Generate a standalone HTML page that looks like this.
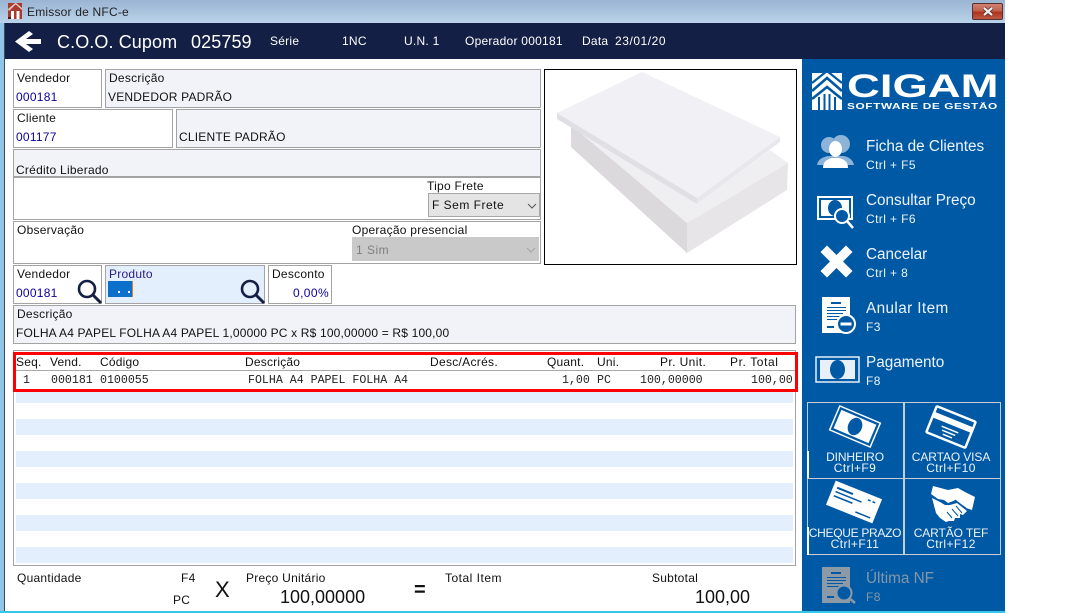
<!DOCTYPE html>
<html lang="pt"><head><meta charset="utf-8"><title>Emissor de NFC-e</title>
<style>
html,body{margin:0;padding:0;width:1080px;height:613px;overflow:hidden;background:#fff}
body{position:relative;font-family:"Liberation Sans",sans-serif;font-size:12px;color:#111}
.b{position:absolute;box-sizing:border-box;border:1px solid #a3a3a3;outline:0;background:#fff}
.g{background:#f1f3f9}
.r{position:absolute}
.t{position:absolute;white-space:nowrap;line-height:14px;letter-spacing:.25px}
.bl{color:#0a00a0}
.w{color:#fff}
.m{font-family:"Liberation Mono",monospace;font-size:11.6px;letter-spacing:0;color:#222}
.h1{font-size:15.3px;color:#eef4fb;line-height:18px;letter-spacing:0}
.h2{font-size:12px;color:#eef4fb;letter-spacing:.4px}
.c{text-align:center;color:#eef4fb;width:96px;letter-spacing:-.1px;line-height:11px}
.c span{letter-spacing:.4px}
svg{position:absolute;overflow:visible}
</style></head><body>
<div class="r" style="left:0;top:0;width:1005px;height:23px;background:linear-gradient(#9ab4d2,#bad3ea)"></div>
<div class="r" style="left:0;top:23px;width:4px;height:590px;background:#8fc6e6"></div>
<div class="r" style="left:4px;top:23px;width:1px;height:590px;background:#3a4a60"></div>
<div class="r" style="left:0;top:611px;width:1005px;height:2px;background:#35c6e8"></div>
<svg style="left:8px;top:3px" width="14" height="16" viewBox="0 0 14 16"><rect width="14" height="16" fill="#a83a30"/><path d="M0 6L6 1L8 1L1 8ZM8 0L14 5V7L6 0Z" fill="#e8c8c0"/><rect x="3" y="8" width="3" height="8" fill="#fff"/><rect x="8.500" y="8" width="3" height="8" fill="#fff"/><rect x="0" y="14" width="3" height="2" fill="#501510"/></svg>
<div class="t" style="left:27px;top:5px;color:#222;letter-spacing:.2px">Emissor de NFC-e</div>
<div class="r" style="left:972px;top:3px;width:31px;height:17px;box-sizing:border-box;border:1px solid #5a3030;border-radius:2px;background:linear-gradient(#cf8373 0,#c2614c 45%,#b0331d 55%,#bb5a44 100%)"></div>
<svg style="left:982px;top:7px" width="12" height="9" viewBox="0 0 12 9"><path d="M2 1L10 8M10 1L2 8" stroke="#4a2a2a" stroke-width="3.800"/><path d="M2 1L10 8M10 1L2 8" stroke="#eee" stroke-width="2.200"/></svg>

<div class="r" style="left:5px;top:23px;width:1000px;height:36px;background:#131f45"></div>
<svg style="left:15px;top:31px" width="27" height="22" viewBox="0 0 27 22"><path d="M0 10.500L14 0L18 3L11 8H26V13H11L18 18L14 21Z" fill="#fff"/></svg>
<div class="t w" style="left:57px;top:32px;font-size:18px;line-height:21px;letter-spacing:.1px">C.O.O. Cupom</div>
<div class="t w" style="left:191px;top:32px;font-size:18px;line-height:21px;letter-spacing:.1px">025759</div>
<div class="t w" style="left:270px;top:34px">Série</div>
<div class="t w" style="left:342px;top:34px">1NC</div>
<div class="t w" style="left:404px;top:34px">U.N. 1</div>
<div class="t w" style="left:465px;top:34px">Operador 000181</div>
<div class="t w" style="left:582px;top:34px">Data</div>
<div class="t w" style="left:615px;top:34px;letter-spacing:.55px">23/01/20</div>

<div class="b" style="left:13px;top:69px;width:89px;height:39px"></div>
<div class="t" style="left:17px;top:71px">Vendedor</div><div class="t bl" style="left:16px;top:90px">000181</div>
<div class="b g" style="left:105px;top:69px;width:436px;height:39px"></div>
<div class="t" style="left:109px;top:71px">Descrição</div><div class="t" style="left:108px;top:90px;letter-spacing:.2px">VENDEDOR PADRÃO</div>
<div class="b" style="left:13px;top:109px;width:160px;height:39px"></div>
<div class="t" style="left:17px;top:111px">Cliente</div><div class="t bl" style="left:16px;top:130px">001177</div>
<div class="b g" style="left:176px;top:109px;width:365px;height:39px"></div>
<div class="t" style="left:179px;top:130px;letter-spacing:.2px">CLIENTE PADRÃO</div>
<div class="b g" style="left:13px;top:149px;width:528px;height:28px"></div>
<div class="t" style="left:16px;top:163px">Crédito Liberado</div>
<div class="b" style="left:13px;top:177px;width:528px;height:43px"></div>
<div class="t" style="left:427px;top:179px">Tipo Frete</div>
<div class="r" style="left:428px;top:193px;width:112px;height:24px;box-sizing:border-box;border:1px solid #a8a8a8;background:#e4e4e4"></div>
<div class="t" style="left:432px;top:198px;letter-spacing:.5px">F Sem Frete</div>
<svg style="left:527px;top:203px" width="10" height="6" viewBox="0 0 10 6"><path d="M1 1L5 5L9 1" fill="none" stroke="#555" stroke-width="1"/></svg>
<div class="b" style="left:13px;top:221px;width:528px;height:43px"></div>
<div class="t" style="left:17px;top:223px">Observação</div>
<div class="t" style="left:352px;top:223px">Operação presencial</div>
<div class="r" style="left:352px;top:237px;width:187px;height:24px;background:#c9c9c9"></div>
<div class="t" style="left:356px;top:243px;color:#7f7f7f;letter-spacing:.5px">1 Sim</div>
<svg style="left:526px;top:247px" width="10" height="6" viewBox="0 0 10 6"><path d="M1 1L5 5L9 1" fill="none" stroke="#a5a5a5" stroke-width="1"/></svg>

<div class="r" style="left:544px;top:69px;width:253px;height:196px;box-sizing:border-box;border:1px solid #000;background:#fff"></div>
<svg style="left:544px;top:69px" width="253" height="196" viewBox="544 69 253 196">
<path d="M571 125L571 147L687 253L687 223L633 177Z" fill="#dbd9db"/>
<path d="M687 223L687 253L787 190L788 163Z" fill="#e7e5e8"/>
<path d="M571 125L633 177L687 223L788 163L770 150L697 204Z" fill="#efeef1"/>
<path d="M557 113L642 72L780 137L697 198Z" fill="#f0f0f5"/>
<path d="M557 113L697 198V204L557 119Z" fill="#e0dfe4"/>
<path d="M697 198L780 137V142L697 204Z" fill="#e8e7eb"/>
</svg>

<div class="b" style="left:13px;top:265px;width:89px;height:39px"></div>
<div class="t" style="left:17px;top:267px">Vendedor</div><div class="t bl" style="left:16px;top:286px">000181</div>
<svg style="left:76px;top:278px" width="26" height="26" viewBox="0 0 26 26"><circle cx="11" cy="11" r="8" fill="none" stroke="#131f45" stroke-width="2.600"/><path d="M17 17L25 25" stroke="#131f45" stroke-width="3"/></svg>
<div class="b" style="left:105px;top:265px;width:160px;height:39px;background:#e3effc"></div>
<div class="t" style="left:109px;top:267px;color:#2a1a88">Produto</div>
<div class="r" style="left:108px;top:281px;width:25px;height:16px;background:#0a70cc"></div>
<div class="r" style="left:132px;top:281px;width:1px;height:16px;background:#e87a20"></div>
<div class="r" style="left:118px;top:291px;width:1.500px;height:2px;background:#fff"></div>
<div class="r" style="left:128px;top:291px;width:1.500px;height:2px;background:#fff"></div>
<svg style="left:239px;top:278px" width="26" height="26" viewBox="0 0 26 26"><circle cx="11" cy="11" r="8" fill="none" stroke="#131f45" stroke-width="2.600"/><path d="M17 17L25 25" stroke="#131f45" stroke-width="3"/></svg>
<div class="b" style="left:268px;top:265px;width:64px;height:39px"></div>
<div class="t" style="left:272px;top:267px">Desconto</div><div class="t bl" style="left:293px;top:286px;letter-spacing:.4px">0,00%</div>
<div class="b g" style="left:13px;top:305px;width:783px;height:39px"></div>
<div class="t" style="left:17px;top:307px">Descrição</div>
<div class="t" style="left:16px;top:326px;letter-spacing:.17px">FOLHA A4 PAPEL FOLHA A4 PAPEL 1,00000 PC x R$ 100,00000 = R$ 100,00</div>

<div class="b" style="left:13px;top:350px;width:783px;height:216px"></div>
<div class="r" style="left:16px;top:387px;width:777px;height:16px;background:#e3effc"></div>
<div class="r" style="left:16px;top:419px;width:777px;height:16px;background:#e3effc"></div>
<div class="r" style="left:16px;top:451px;width:777px;height:16px;background:#e3effc"></div>
<div class="r" style="left:16px;top:483px;width:777px;height:16px;background:#e3effc"></div>
<div class="r" style="left:16px;top:515px;width:777px;height:16px;background:#e3effc"></div>
<div class="r" style="left:16px;top:547px;width:777px;height:16px;background:#e3effc"></div>
<div class="r" style="left:13px;top:352px;width:785px;height:40px;box-sizing:border-box;border:3px solid #f00;background:#fff"></div>
<div class="r" style="left:16px;top:370px;width:779px;height:1px;background:#a8a8a8"></div>
<div class="t" style="left:16px;top:355px;letter-spacing:.2px">Seq.</div>
<div class="t" style="left:50px;top:355px;letter-spacing:.2px">Vend.</div>
<div class="t" style="left:100px;top:355px;letter-spacing:.2px">Código</div>
<div class="t" style="left:245px;top:355px;letter-spacing:.2px">Descrição</div>
<div class="t" style="left:430px;top:355px;letter-spacing:.3px">Desc/Acrés.</div>
<div class="t" style="left:547px;top:355px;letter-spacing:.2px">Quant.</div>
<div class="t" style="left:597px;top:355px;letter-spacing:.2px">Uni.</div>
<div class="t" style="left:660px;top:355px;letter-spacing:.4px">Pr. Unit.</div>
<div class="t" style="left:730px;top:355px;letter-spacing:.6px">Pr. Total</div>
<div class="t m" style="left:23px;top:374px">1</div>
<div class="t m" style="left:51px;top:374px">000181</div>
<div class="t m" style="left:100px;top:374px">0100055</div>
<div class="t m" style="left:248px;top:374px">FOLHA A4 PAPEL FOLHA A4</div>
<div class="t m" style="left:562px;top:374px">1,00</div>
<div class="t m" style="left:597px;top:374px">PC</div>
<div class="t m" style="left:640px;top:374px">100,00000</div>
<div class="t m" style="left:751px;top:374px">100,00</div>

<div class="t" style="left:17px;top:571px">Quantidade</div>
<div class="t" style="left:181px;top:571px">F4</div>
<div class="t" style="left:173px;top:593px">PC</div>
<div class="t" style="left:215px;top:578px;font-size:22px;line-height:24px;color:#111;letter-spacing:0">X</div>
<div class="t" style="left:246px;top:571px">Preço Unitário</div>
<div class="t" style="left:280px;top:587px;font-size:18px;line-height:21px;letter-spacing:0">100,00000</div>
<div class="t" style="left:414px;top:578px;font-size:20px;line-height:24px;font-weight:bold">=</div>
<div class="t" style="left:445px;top:571px;letter-spacing:.5px">Total Item</div>
<div class="t" style="left:652px;top:571px">Subtotal</div>
<div class="t" style="left:695px;top:587px;font-size:18px;line-height:21px;letter-spacing:0">100,00</div>

<div class="r" style="left:802px;top:59px;width:203px;height:552px;background:#0059a5"></div>
<svg style="left:812px;top:73px" width="31" height="37" viewBox="0 0 31 37"><rect width="30" height="37" fill="#fff"/><g fill="none" stroke="#0059a5"><path d="M-1 9L7 1L15 8L23 1L31 9" stroke-width="0"/><path d="M0 10L15 -2L30 10" stroke-width="2.200"/><path d="M0 18L15 5L30 18" stroke-width="2.600"/><path d="M0 26L15 14L30 26" stroke-width="2.600"/></g><g fill="#0059a5"><rect x="6" y="24" width="2" height="13"/><rect x="22" y="24" width="2" height="13"/><rect x="11.500" y="21" width="2" height="16"/><rect x="16.500" y="21" width="2" height="16"/></g></svg>
<div class="t" style="left:847px;top:72px;font-size:32px;line-height:28px;font-weight:bold;color:#fff;letter-spacing:0;transform-origin:0 0;transform:scaleX(1.42)">CIGAM</div>
<div class="t" style="left:847px;top:102px;font-size:8px;line-height:9px;font-weight:bold;color:#fff;letter-spacing:.4px;transform-origin:0 0;transform:scaleX(1.48)">SOFTWARE DE GESTÃO</div>

<svg style="left:817px;top:135px" width="38" height="34" viewBox="0 0 38 34"><circle cx="12" cy="10" r="8" fill="#8db4d8"/><circle cx="24" cy="9" r="9" fill="#8db4d8"/><path d="M0 30C1 24 6 22 11 21L27 21C32 22 36 25 37 30H27L10 30Z" fill="#8db4d8"/><ellipse cx="18.500" cy="14" rx="6.500" ry="8" fill="#fff"/><path d="M6 33C6 26 11 24 15 23H22C26 24 31 26 31 33Z" fill="#fff"/></svg>
<div class="t h1" style="left:866px;top:138px">Ficha de Clientes</div><div class="t h2" style="left:866px;top:158px">Ctrl + F5</div>

<svg style="left:817px;top:195px" width="40" height="36" viewBox="0 0 40 36"><rect x="1" y="2" width="34" height="22" fill="none" stroke="#fff" stroke-width="2"/><path d="M4 5H32V21H4Z" fill="#fff"/><ellipse cx="18" cy="13" rx="7" ry="8" fill="#0059a5"/><circle cx="25" cy="21" r="7" fill="#0059a5" stroke="#fff" stroke-width="2"/><path d="M30 26L36 33" stroke="#fff" stroke-width="2.500"/></svg>
<div class="t h1" style="left:866px;top:192px">Consultar Preço</div><div class="t h2" style="left:866px;top:212px">Ctrl + F6</div>

<svg style="left:820px;top:245px" width="33" height="33" viewBox="0 0 33 33"><path d="M0.500 7L7 0.500L16.500 10L26 0.500L32.500 7L23 16.500L32.500 26L26 32.500L16.500 23L7 32.500L0.500 26L10 16.500Z" fill="#fff"/></svg>
<div class="t h1" style="left:866px;top:246px">Cancelar</div><div class="t h2" style="left:866px;top:266px">Ctrl + 8</div>

<svg style="left:822px;top:297px" width="34" height="37" viewBox="0 0 34 37"><rect width="28" height="36" fill="#fff"/><g fill="#0059a5"><rect x="9" y="5" width="10" height="2"/><rect x="5" y="10" width="19" height="1"/><rect x="5" y="13" width="19" height="1"/><rect x="5" y="16" width="16" height="1"/><rect x="5" y="19" width="14" height="1"/><rect x="5" y="22" width="12" height="1"/><path d="M5 29H12V31H5Z"/></g><circle cx="24" cy="27" r="9" fill="#0059a5" stroke="#fff" stroke-width="2"/><rect x="18.500" y="25.500" width="11" height="3" fill="#fff"/></svg>
<div class="t h1" style="left:866px;top:300px;letter-spacing:.4px">Anular Item</div><div class="t h2" style="left:866px;top:320px">F3</div>

<svg style="left:815px;top:356px" width="45" height="27" viewBox="0 0 45 27"><rect x="1" y="1" width="43" height="25" fill="none" stroke="#e8eff7" stroke-width="1.500"/><path d="M5 4H40V23H5Z" fill="#e8eff7"/><ellipse cx="22.500" cy="13.500" rx="7.500" ry="9.500" fill="#0059a5"/></svg>
<div class="t h1" style="left:866px;top:354px">Pagamento</div><div class="t h2" style="left:866px;top:374px">F8</div>

<div class="r" style="left:807px;top:402px;width:194px;height:153px;box-sizing:border-box;border:1px solid #c4ccd6"></div>
<div class="r" style="left:903px;top:402px;width:2px;height:153px;background:#c4ccd6"></div>
<div class="r" style="left:807px;top:478px;width:194px;height:1px;background:#c4ccd6"></div>
<div class="r" style="left:807px;top:451px;width:2px;height:27px;background:#fff"></div>
<div class="r" style="left:807px;top:527px;width:2px;height:28px;background:#fff"></div>

<svg style="left:828px;top:405px" width="54" height="44" viewBox="0 0 54 44"><g transform="translate(27 21.500) rotate(23)"><rect x="-22" y="-13" width="44" height="26" fill="none" stroke="#fff" stroke-width="1.500"/><rect x="-19" y="-10" width="38" height="20" fill="#fff"/><ellipse cx="0" cy="0" rx="7" ry="9" fill="#0059a5"/></g></svg>
<svg style="left:924px;top:404px" width="54" height="46" viewBox="0 0 54 46"><g transform="translate(27 23) rotate(22)"><rect x="-21" y="-14" width="42" height="28" fill="none" stroke="#fff" stroke-width="2.500" rx="1"/><rect x="-21" y="-8" width="42" height="6" fill="#fff"/><rect x="-9" y="2" width="18" height="1.500" fill="#fff"/><rect x="-7" y="5.500" width="14" height="1.500" fill="#fff"/><rect x="-5" y="9" width="10" height="1.500" fill="#fff"/></g></svg>
<div class="t c" style="left:807px;top:452px">DINHEIRO<br><span>Ctrl+F9</span></div>
<div class="t c" style="left:903px;top:452px">CARTAO VISA<br><span>Ctrl+F10</span></div>

<svg style="left:826px;top:480px" width="56" height="44" viewBox="0 0 56 44"><g transform="translate(28 22) rotate(22)"><rect x="-25" y="-13" width="50" height="26" fill="#fff"/><rect x="-21" y="-8" width="17" height="2" fill="#0059a5"/><rect x="-21" y="-3.500" width="28" height="1.500" fill="#0059a5"/><rect x="-21" y="1" width="20" height="1.500" fill="#0059a5"/><rect x="12" y="-8" width="3" height="1.500" fill="#0059a5"/><rect x="17" y="-8" width="3" height="1.500" fill="#0059a5"/><rect x="5" y="8" width="16" height="1.500" fill="#0059a5"/></g></svg>
<svg style="left:929px;top:485px" width="48" height="38" viewBox="0 0 48 38"><path d="M4 1L19 5L29 3L36 7L46 12L43 25L37 23L27 15L19 18L15 15L9 14L2 9Z" fill="#fff"/><path d="M3 13L11 17L16 20L21 20L28 18L38 26L34 30L31 29L31 33L26 33L25 36L20 36L17 37L11 33L7 28Z" fill="#fff"/><path d="M19 20L27 15M37 23L28 17M23 33L18 27M29 31L23 24M33 28L27 21" stroke="#0059a5" stroke-width="1" fill="none"/></svg>
<div class="t c" style="left:807px;top:528px;letter-spacing:-.3px">CHEQUE PRAZO<br><span>Ctrl+F11</span></div>
<div class="t c" style="left:903px;top:528px">CARTÃO TEF<br><span>Ctrl+F12</span></div>

<svg style="left:822px;top:567px" width="34" height="37" viewBox="0 0 34 37"><rect width="28" height="36" fill="#8c9aa8"/><g fill="#0059a5"><rect x="9" y="5" width="10" height="2"/><rect x="5" y="10" width="19" height="1"/><rect x="5" y="13" width="19" height="1"/><rect x="5" y="16" width="16" height="1"/><rect x="5" y="19" width="14" height="1"/><rect x="5" y="29" width="7" height="2"/></g><circle cx="22" cy="26" r="7.500" fill="#0059a5" stroke="#8c9aa8" stroke-width="2"/><path d="M27 31L33 36" stroke="#8c9aa8" stroke-width="2.500"/></svg>
<div class="t h1" style="left:866px;top:570px;color:#8596a8">Última NF</div><div class="t h2" style="left:866px;top:590px;color:#8596a8">F8</div>
</body></html>
